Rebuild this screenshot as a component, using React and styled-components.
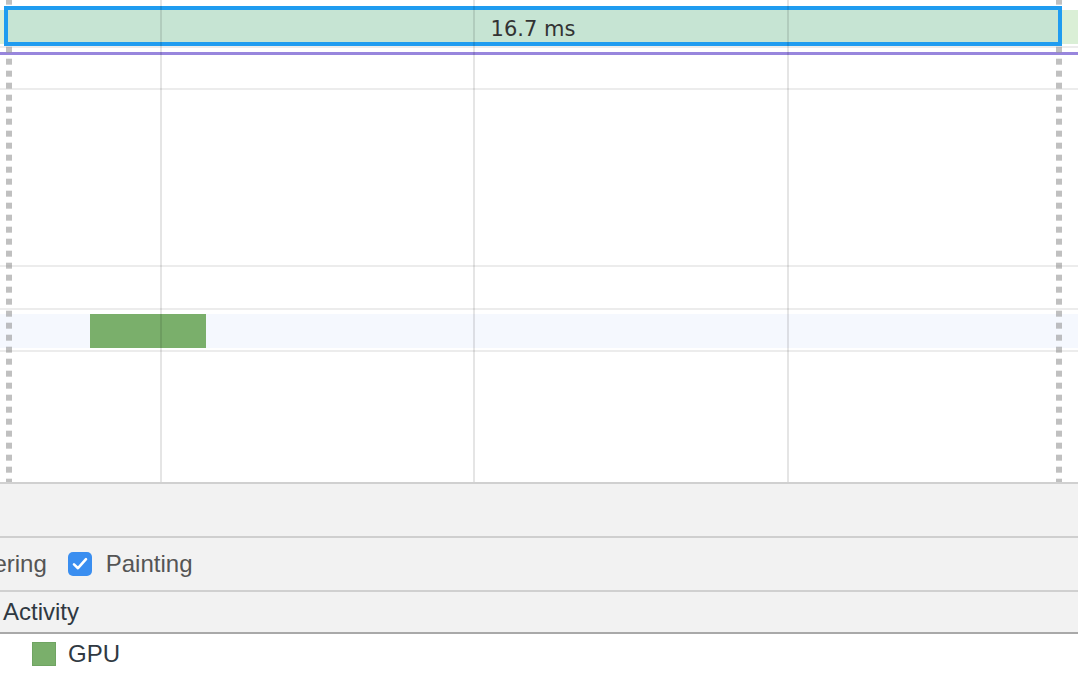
import React from 'react'
import styled, { createGlobalStyle } from 'styled-components'

const GlobalStyle = createGlobalStyle`
  html, body { margin: 0; padding: 0; background: #fff; }
  body { font-family: "Liberation Sans", Arial, sans-serif; }
`

const gridLines = [160, 473, 787]
const markers = [6, 1056]

function App() {
  return (
    <Page>
      <GlobalStyle />
      <Timeline>
        <FrameTrack>
          <FrameStrip />
          <SelectedFrame>
            <FrameLabel>16.7 ms</FrameLabel>
          </SelectedFrame>
        </FrameTrack>
        <Divider />
        <Spacer h={4} />
        <IntervalLine />
        <Spacer h={33} />
        <Divider />
        <Spacer h={175} />
        <Divider />
        <Spacer h={41} />
        <Divider />
        <Spacer h={4} />
        <Lane>
          <Record left={90} width={116} />
        </Lane>
        <Spacer h={2} />
        <Divider />

        {gridLines.map((x) => (
          <GridLine key={x} style={{ left: x }} />
        ))}
        {markers.map((x) => (
          <Marker key={x} style={{ left: x }} />
        ))}
      </Timeline>

      <Toolbar />
      <FilterBar>
        <FilterLabel>Rendering</FilterLabel>
        <Checkbox>
          <svg width="16" height="14" viewBox="0 0 16 14">
            <path d="M2 7.4 L6 11.2 L14 2.2" fill="none" stroke="#fff" strokeWidth="2.6" strokeLinecap="round" strokeLinejoin="round" />
          </svg>
        </Checkbox>
        <FilterLabel>Painting</FilterLabel>
      </FilterBar>
      <TableHeader>Activity</TableHeader>
      <LegendRow>
        <Swatch />
        <LegendText>GPU</LegendText>
      </LegendRow>
    </Page>
  )
}

const Page = styled.div`
  width: 1078px;
  height: 696px;
  overflow: hidden;
  background: #fff;
  display: flex;
  flex-direction: column;
`

const Timeline = styled.div`
  position: relative;
  height: 482px;
  border-bottom: 2px solid #d0d0d0;
  display: flex;
  flex-direction: column;
  flex-shrink: 0;
`

const FrameTrack = styled.div`
  position: relative;
  height: 46px;
  flex-shrink: 0;
`

const FrameStrip = styled.div`
  position: absolute;
  left: 0;
  right: 0;
  top: 10px;
  height: 34px;
  background: #daefd6;
`

const SelectedFrame = styled.div`
  position: absolute;
  left: 4px;
  top: 6px;
  width: 1050px;
  height: 32px;
  border: 4px solid #1f9cf0;
  background: #c6e4d3;
  z-index: 3;
  display: flex;
  align-items: center;
  justify-content: center;
`

const FrameLabel = styled.span`
  font-family: "DejaVu Sans", Verdana, sans-serif;
  font-size: 21px;
  color: #333;
  padding-top: 6px;
`

const Divider = styled.div`
  height: 2px;
  background: #ececec;
  flex-shrink: 0;
`

const Spacer = styled.div`
  height: ${(p) => p.h}px;
  flex-shrink: 0;
`

const IntervalLine = styled.div`
  height: 3px;
  background: #9886dd;
  flex-shrink: 0;
`

const Lane = styled.div`
  position: relative;
  height: 34px;
  background: #f5f8fe;
  flex-shrink: 0;
`

const Record = styled.div`
  position: absolute;
  top: 0;
  bottom: 0;
  left: ${(p) => p.left}px;
  width: ${(p) => p.width}px;
  background: #7aaf6b;
`

const GridLine = styled.div`
  position: absolute;
  top: 0;
  bottom: 0;
  width: 2px;
  background: rgba(0, 0, 0, 0.1);
  z-index: 4;
`

const Marker = styled.div`
  position: absolute;
  top: 0;
  bottom: 0;
  width: 6px;
  background-image: linear-gradient(to bottom, rgba(150, 150, 150, 0.6) 50%, transparent 50%);
  background-size: 6px 12px;
  background-position: 0 10.7px;
  z-index: 2;
`

const Toolbar = styled.div`
  height: 52px;
  background: #f2f2f2;
  border-bottom: 2px solid #cfcfcf;
  flex-shrink: 0;
`

const FilterBar = styled.div`
  height: 52px;
  background: #f2f2f2;
  border-bottom: 2px solid #d0d0d0;
  display: flex;
  align-items: center;
  flex-shrink: 0;
  margin-left: -64px;
`

const FilterLabel = styled.span`
  font-size: 24px;
  color: #555;
  & + * { margin-left: 21px; }
`

const Checkbox = styled.span`
  width: 24px;
  height: 24px;
  border-radius: 5px;
  background: #3a8ef0;
  display: flex;
  align-items: center;
  justify-content: center;
  margin-right: 14px;
`

const TableHeader = styled.div`
  height: 40px;
  background: #f2f2f2;
  border-bottom: 2px solid #a9a9a9;
  display: flex;
  align-items: center;
  padding-left: 3px;
  font-size: 24px;
  color: #303942;
  flex-shrink: 0;
`

const LegendRow = styled.div`
  height: 40px;
  display: flex;
  align-items: center;
  padding-left: 32px;
  gap: 12px;
`

const Swatch = styled.span`
  width: 22px;
  height: 22px;
  background: #7aaf6b;
  border: 1px solid #6fa462;
`

const LegendText = styled.span`
  font-size: 24px;
  color: #303942;
`

export default App
